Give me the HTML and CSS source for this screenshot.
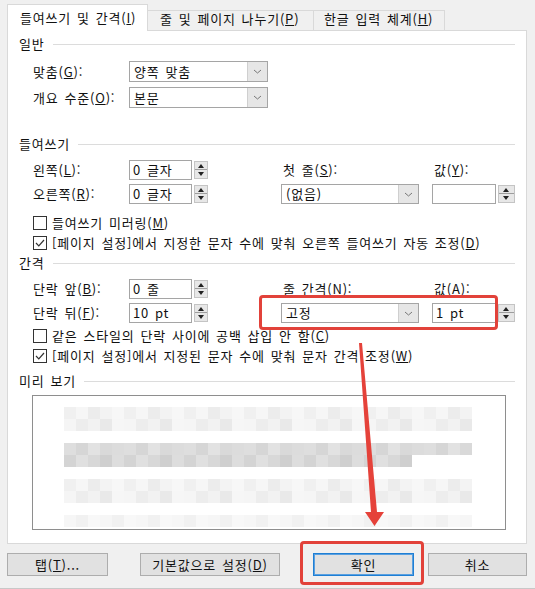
FILE: index.html
```html
<!DOCTYPE html>
<html lang="ko">
<head>
<meta charset="utf-8">
<title>단락</title>
<link rel="stylesheet" href="styles.css">
</head>
<body>
<div class="dialog">
  <div class="tabs">
    <div class="tab active">들여쓰기 및 간격(<u>I</u>)</div>
    <div class="tab t2">줄 및 페이지 나누기(<u>P</u>)</div>
    <div class="tab t3">한글 입력 체계(<u>H</u>)</div>
  </div>

  <div class="panel">
    <div class="group-title"><span>일반</span></div>
    <div class="row first">
      <span class="label">맞춤(<u>G</u>):</span>
      <div class="select narrow"><span class="value">양쪽 맞춤</span><span class="drop"><svg width="9" height="5" viewBox="0 0 9 5"><polyline points="1,1 4.5,4 8,1" fill="none" stroke="#777" stroke-width="1"/></svg></span></div>
    </div>
    <div class="row second">
      <span class="label">개요 수준(<u>O</u>):</span>
      <div class="select narrow"><span class="value">본문</span><span class="drop"><svg width="9" height="5" viewBox="0 0 9 5"><polyline points="1,1 4.5,4 8,1" fill="none" stroke="#777" stroke-width="1"/></svg></span></div>
    </div>

    <div class="group-title indent-title"><span>들여쓰기</span></div>
    <div class="field-grid">
      <span class="label">왼쪽(<u>L</u>):</span>
      <div class="spinner"><span class="box">0 글자</span><span class="spin"></span></div>
      <span></span>
      <span class="label sub">첫 줄(<u>S</u>):</span>
      <span></span>
      <span class="label sub">값(<u>Y</u>):</span>

      <span class="label">오른쪽(<u>R</u>):</span>
      <div class="spinner"><span class="box">0 글자</span><span class="spin"></span></div>
      <span></span>
      <div class="select"><span class="value">(없음)</span><span class="drop"><svg width="9" height="5" viewBox="0 0 9 5"><polyline points="1,1 4.5,4 8,1" fill="none" stroke="#777" stroke-width="1"/></svg></span></div>
      <span></span>
      <div class="spinner wide"><span class="box"></span><span class="spin"></span></div>
    </div>
    <div class="check first-check"><span class="cb"></span>들여쓰기 미러링(<u>M</u>)</div>
    <div class="check"><span class="cb on"><svg width="10" height="8" viewBox="0 0 10 8"><polyline points="1,4 3.8,6.8 9,1" fill="none" stroke="#333" stroke-width="1.2"/></svg></span>[페이지 설정]에서 지정한 문자 수에 맞춰 오른쪽 들여쓰기 자동 조정(<u>D</u>)</div>

    <div class="group-title spacing-title"><span>간격</span></div>
    <div class="field-grid">
      <span class="label">단락 앞(<u>B</u>):</span>
      <div class="spinner"><span class="box">0 줄</span><span class="spin"></span></div>
      <span></span>
      <span class="label sub">줄 간격(<u>N</u>):</span>
      <span></span>
      <span class="label sub">값(<u>A</u>):</span>

      <span class="label">단락 뒤(<u>F</u>):</span>
      <div class="spinner"><span class="box">10 pt</span><span class="spin"></span></div>
      <span></span>
      <div class="select"><span class="value">고정</span><span class="drop"><svg width="9" height="5" viewBox="0 0 9 5"><polyline points="1,1 4.5,4 8,1" fill="none" stroke="#777" stroke-width="1"/></svg></span></div>
      <span></span>
      <div class="spinner wide"><span class="box">1 pt</span><span class="spin"></span></div>
    </div>
    <div class="check second-group"><span class="cb"></span>같은 스타일의 단락 사이에 공백 삽입 안 함(<u>C</u>)</div>
    <div class="check"><span class="cb on"><svg width="10" height="8" viewBox="0 0 10 8"><polyline points="1,4 3.8,6.8 9,1" fill="none" stroke="#333" stroke-width="1.2"/></svg></span>[페이지 설정]에서 지정된 문자 수에 맞춰 문자 간격 조정(<u>W</u>)</div>

    <div class="group-title preview-title"><span>미리 보기</span></div>
    <div class="preview">
      <div class="line light"><div class="half a"></div><div class="half b"></div></div>
      <div class="line dark"><div class="half a"></div><div class="half b short"></div></div>
      <div class="line light"><div class="half a"></div><div class="half b"></div></div>
      <div class="line faint"><div class="half a"></div></div>
    </div>
  </div>

  <div class="buttons">
    <button class="btn tab-btn">탭(<u>T</u>)...</button>
    <button class="btn default-btn">기본값으로 설정(<u>D</u>)</button>
    <button class="btn ok-btn">확인</button>
    <button class="btn cancel-btn">취소</button>
  </div>

  <!-- red callouts drawn over the dialog -->
  <div class="callout callout-spacing"></div>
  <div class="callout callout-ok"></div>
  <svg class="arrow" width="535" height="589" viewBox="0 0 535 589">
    <polygon points="359,343 362,343 377,512 384,512 374.5,526 365,512 371,512" fill="#e5423a"/>
  </svg>
</div>
</body>
</html>
```

FILE: styles.css
```css
html, body {
  margin: 0;
  padding: 0;
}

body {
  width: 535px;
  height: 589px;
  overflow: hidden;
  background: #f0f0f0;
  font-family: "Noto Sans CJK KR", "Noto Sans", sans-serif;
  font-size: 13px;
  letter-spacing: 0.8px;
  word-spacing: 1.5px;
  line-height: 16px;
  color: #111;
}

u {
  text-decoration: underline;
  text-underline-offset: 1px;
}

.dialog {
  position: relative;
  height: 589px;
  box-sizing: border-box;
  padding: 4px 0 0 7px;
  border-bottom: 1px solid #c8c8c8;
}

/* tab strip */
.tabs {
  display: flex;
  align-items: flex-end;
  height: 26px;
}

.tab {
  display: flex;
  align-items: center;
  box-sizing: border-box;
  height: 20px;
  padding: 0 0 3px 12px;
  border: 1px solid #d9d9d9;
  border-bottom: none;
  background: #f0f0f0;
  white-space: nowrap;
}

.tab.active {
  position: relative;
  z-index: 1;
  width: 141px;
  height: 27px;
  margin-bottom: -1px;
  padding-bottom: 1px;
  background: #fff;
}

.tab.t2 {
  width: 167px;
  margin-left: -1px;
}

.tab.t3 {
  width: 132px;
  margin-left: -1px;
  padding-left: 10px;
}

/* page body */
.panel {
  width: 520px;
  height: 514px;
  box-sizing: border-box;
  padding: 5px 11px 0 11px;
  border: 1px solid #d9d9d9;
  background: #fff;
}

.group-title {
  display: flex;
  align-items: center;
  height: 16px;
}

.group-title::after {
  content: "";
  flex: 1;
  height: 1px;
  margin-left: 8px;
  background: #dcdcdc;
}

.indent-title { margin-top: 28px; }
.spacing-title { margin-top: 2px; }
.preview-title { margin-top: 7px; }

.row {
  display: flex;
  align-items: center;
  height: 21px;
  padding-left: 14px;
}

.row.first { margin-top: 9px; }
.row.second { margin-top: 5px; }

.label {
  display: flex;
  align-items: center;
  white-space: nowrap;
}

.row .label { width: 96px; }

.label.sub { padding-left: 2px; }

/* combo boxes */
.select {
  display: flex;
  box-sizing: border-box;
  height: 100%;
  border: 1px solid #a5a5a5;
  background: #fff;
}

.select.narrow { width: 139px; }

.select .value {
  flex: 1;
  display: flex;
  align-items: center;
  padding-left: 4px;
}

.select .drop {
  display: flex;
  align-items: center;
  justify-content: center;
  width: 19px;
  border-left: 1px solid #cfcfcf;
  background: #e6e6e6;
}

/* label/control grid */
.field-grid {
  display: grid;
  grid-template-columns: 96px 82px 70px 138px 13px 83px;
  grid-template-rows: 20px 20px;
  row-gap: 4px;
  margin-top: 8px;
  padding-left: 14px;
}

.spinner {
  display: flex;
  align-items: center;
  gap: 2px;
}

.spinner .box {
  display: flex;
  align-items: center;
  box-sizing: border-box;
  width: 63px;
  height: 20px;
  padding-left: 3px;
  border: 1px solid #a5a5a5;
  background: #fff;
}

.spinner.wide .box { width: 64px; }

.spin {
  position: relative;
  box-sizing: border-box;
  width: 14px;
  height: 18px;
  border: 1px solid #c4c4c4;
  background: linear-gradient(#e7e7e7 0 7px, #9d9d9d 7px 8px, #e7e7e7 8px);
}

.spinner.wide .spin {
  width: 17px;
}

.spin::before,
.spin::after {
  content: "";
  position: absolute;
  left: 50%;
  margin-left: -3.5px;
  border-left: 3.5px solid transparent;
  border-right: 3.5px solid transparent;
}

.spin::before {
  top: 2px;
  border-bottom: 4px solid #222;
}

.spin::after {
  bottom: 2px;
  border-top: 4px solid #222;
}

/* check boxes */
.check {
  display: flex;
  align-items: center;
  height: 20px;
  padding-left: 14px;
  white-space: nowrap;
}

.first-check { margin-top: 9px; }
.second-group { margin-top: 3px; }

.cb {
  display: flex;
  align-items: center;
  justify-content: center;
  box-sizing: border-box;
  width: 14px;
  height: 14px;
  margin-right: 5px;
  border: 1px solid #333;
  background: #fff;
}

/* preview */
.preview {
  box-sizing: border-box;
  height: 135px;
  margin: 6px 9px 0 13px;
  padding: 11px 0 0 31px;
  border: 1px solid #8e8e8e;
  background: #fff;
  overflow: hidden;
}

.line {
  width: 408px;
  height: 24px;
  margin-bottom: 12px;
}

.line .half {
  height: 12px;
}

.line.light .a {
  background: repeating-linear-gradient(90deg, #f0f0f0 0 12px, #f6f6f6 12px 24px, #ececec 24px 36px, #f3f3f3 36px 48px, #f7f7f7 48px 60px);
}

.line.light .b {
  background: repeating-linear-gradient(90deg, #f5f5f5 0 12px, #ededed 12px 24px, #f2f2f2 24px 36px, #e9e9e9 36px 48px, #f6f6f6 48px 60px);
}

.line.dark .a {
  background: repeating-linear-gradient(90deg, #dedede 0 12px, #d6d6d6 12px 24px, #e2e2e2 24px 36px, #d9d9d9 36px 48px, #dcdcdc 48px 60px);
}

.line.dark .b {
  width: 348px;
  background: repeating-linear-gradient(90deg, #d4d4d4 0 12px, #e0e0e0 12px 24px, #d8d8d8 24px 36px, #cfcfcf 36px 48px, #dddddd 48px 60px);
}

.line.faint {
  height: 12px;
}

.line.faint .a {
  background: repeating-linear-gradient(90deg, #f6f6f6 0 12px, #f1f1f1 12px 24px, #f8f8f8 24px 36px);
}

/* command buttons */
.buttons {
  display: flex;
  margin-top: 9px;
}

.btn {
  box-sizing: border-box;
  height: 23px;
  padding: 0;
  border: 1px solid #adadad;
  background: #e1e1e1;
  font: inherit;
  letter-spacing: inherit;
  word-spacing: inherit;
  color: #111;
}

.tab-btn { width: 101px; }
.default-btn { width: 140px; margin-left: 32px; }
.ok-btn { width: 101px; margin-left: 33px; border-color: #1f7fd4; box-shadow: inset 0 0 0 1px #5aa0e0; }
.cancel-btn { width: 99px; margin-left: 14px; }

/* annotation overlay */
.callout {
  position: absolute;
  box-sizing: border-box;
  border: 3px solid #e2423a;
  border-radius: 4px;
  pointer-events: none;
}

.callout-spacing {
  left: 259px;
  top: 295px;
  width: 239px;
  height: 35px;
}

.callout-ok {
  left: 300px;
  top: 541px;
  width: 124px;
  height: 44px;
}

.arrow {
  position: absolute;
  left: 0;
  top: 0;
  pointer-events: none;
}
```
